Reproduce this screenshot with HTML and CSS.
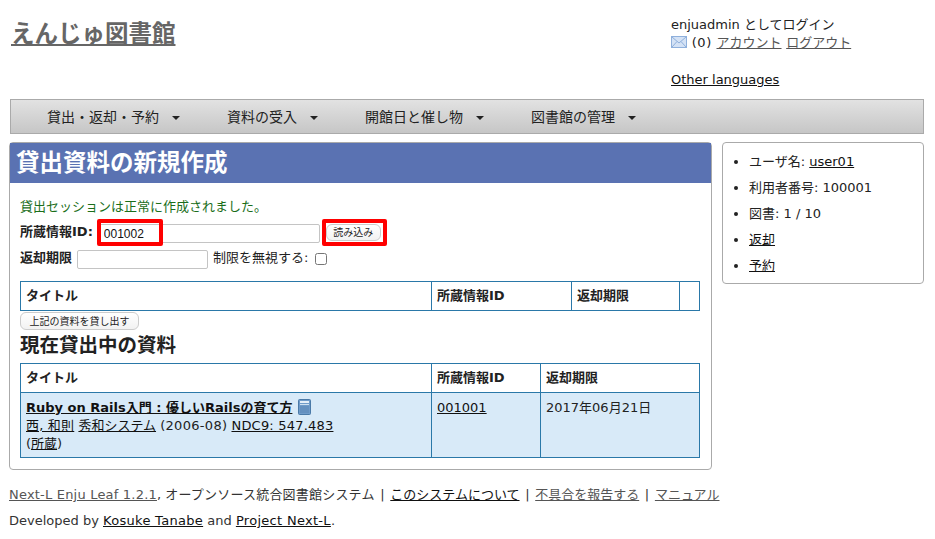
FILE: index.html
```html
<!DOCTYPE html>
<html lang="ja">
<head>
  <meta charset="UTF-8">
  <title>えんじゅ図書館</title>
  <link rel="stylesheet" href="styles.css">
</head>
<body>
<div class="header">
  <h1 class="site-title"><a href="#">えんじゅ図書館</a></h1>
  <div class="user-box">
    <div>enjuadmin としてログイン</div>
    <div class="user-links">
      <svg class="mail-icon" width="16" height="12" viewBox="0 0 16 12">
        <rect x="0.5" y="0.5" width="15" height="11" fill="#d4e2f5" stroke="#8fb0dc"/>
        <path d="M1 1 L8 7 L15 1 M1 11 L6 5.5 M15 11 L10 5.5" fill="none" stroke="#8fb0dc"/>
      </svg>
      <span class="count">(0)</span> <a href="#" class="grey">アカウント</a> <a href="#" class="grey">ログアウト</a>
    </div>
    <div class="lang"><a href="#">Other languages</a></div>
  </div>
</div>

<div class="nav">
  <a href="#">貸出・返却・予約<span class="caret"></span></a>
  <a href="#">資料の受入<span class="caret"></span></a>
  <a href="#">開館日と催し物<span class="caret"></span></a>
  <a href="#">図書館の管理<span class="caret"></span></a>
</div>

<div class="content">
  <div class="panel">
    <h2 class="panel-title">貸出資料の新規作成</h2>
    <div class="panel-body">
      <p class="notice">貸出セッションは正常に作成されました。</p>
      <form class="checkout-form">
        <div class="form-row row-id">
          <label class="field-label">所蔵情報ID:</label>
          <input type="text" class="input-id" value="001002">
          <button type="button" class="btn btn-load">読み込み</button>
          <span class="mark mark-id"></span>
          <span class="mark mark-load"></span>
        </div>
        <div class="form-row row-due">
          <label class="field-label">返却期限</label>
          <input type="text" class="input-date">
          <span class="ignore">制限を無視する:</span>
          <input type="checkbox" class="check">
        </div>
      </form>

      <table class="list list-new">
        <tr>
          <th class="col-title">タイトル</th>
          <th class="col-id">所蔵情報ID</th>
          <th class="col-due">返却期限</th>
          <th class="col-x"></th>
        </tr>
      </table>
      <button type="button" class="btn btn-checkout">上記の資料を貸し出す</button>

      <h3 class="sub-title">現在貸出中の資料</h3>
      <table class="list list-current">
        <tr>
          <th class="col-title">タイトル</th>
          <th class="col-id2">所蔵情報ID</th>
          <th>返却期限</th>
        </tr>
        <tr class="row-blue">
          <td>
            <a href="#" class="book-title">Ruby on Rails入門 : 優しいRailsの育て方</a>
            <svg class="book-icon" width="13" height="16" viewBox="0 0 13 16">
              <rect x="0.5" y="0.5" width="12" height="15" rx="1" fill="#6f9bc9" stroke="#4a7aa8"/>
              <rect x="2" y="2" width="9" height="2" fill="#e4eef8"/>
              <rect x="2" y="5" width="9" height="1" fill="#cfe0f0"/>
              <rect x="2" y="7" width="9" height="7" fill="#6490bf"/>
            </svg>
            <br>
            <a href="#" class="wide-s">西, 和則</a> <a href="#">秀和システム</a> <span class="wide">(2006-08)</span> <a href="#" class="wide-s">NDC9: 547.483</a><br>
            (<a href="#">所蔵</a>)
          </td>
          <td><a href="#">001001</a></td>
          <td>2017年06月21日</td>
        </tr>
      </table>
    </div>
  </div>

  <ul class="side">
    <li>ユーザ名: <a href="#">user01</a></li>
    <li>利用者番号: 100001</li>
    <li>図書: 1 / 10</li>
    <li><a href="#">返却</a></li>
    <li><a href="#">予約</a></li>
  </ul>
</div>

<div class="footer">
  <p><a href="#" class="grey wide-s">Next-L Enju Leaf 1.2.1</a>, <span class="wide-s">オープンソース統合図書館システム</span> <span class="sep">|</span> <a href="#">このシステムについて</a> <span class="sep">|</span> <a href="#" class="grey">不具合を報告する</a> <span class="sep">|</span> <a href="#" class="grey">マニュアル</a></p>
  <p>Developed by <a href="#" class="wide">Kosuke Tanabe</a> and <a href="#" class="wide">Project Next-L</a>.</p>
</div>
</body>
</html>
```

FILE: styles.css
```css
body {
  margin: 0;
  font-family: "DejaVu Sans", "Noto Sans CJK JP", sans-serif;
  font-size: 13px;
  line-height: 18px;
  color: #222;
  background: #fff;
}

a { color: #111; }
a.grey { color: #555; }

.wide { letter-spacing: 0.3px; }
.wide-s { letter-spacing: 0.2px; }

.header {
  display: flex;
  justify-content: space-between;
  height: 99px;
  padding-left: 11px;
}

.site-title {
  margin: 19px 0 0;
  font-size: 23.5px;
  line-height: 30px;
}
.site-title a { color: #666; }

.user-box {
  width: 264px;
  padding-top: 16px;
}
.user-links { margin-bottom: 19px; word-spacing: 0.5px; }
.mail-icon { vertical-align: -1px; }
.count { letter-spacing: 0.6px; }

.nav {
  display: flex;
  box-sizing: border-box;
  margin: 0 11px 0 10px;
  height: 35px;
  padding-left: 36px;
  align-items: center;
  border: 1px solid #aaa;
  background: linear-gradient(#e2e2e2, #c6c6c6);
}
.nav a {
  margin-right: 47px;
  color: #222;
  text-decoration: none;
  font-size: 14px;
}
.caret {
  display: inline-block;
  margin-left: 13px;
  vertical-align: 2px;
  border-top: 4px solid #222;
  border-left: 4px solid transparent;
  border-right: 4px solid transparent;
}

.content {
  display: flex;
  align-items: flex-start;
  gap: 10px;
  margin: 8px 11px 0 9px;
}

.panel {
  box-sizing: border-box;
  width: 703px;
  height: 328px;
  border: 1px solid #aaa;
  border-radius: 4px;
}
.panel-title {
  margin: 0;
  height: 40px;
  padding-left: 6px;
  background: #5a72b2;
  color: #fff;
  font-size: 23.5px;
  line-height: 40px;
}
.panel-body { padding: 0 10px; }

.notice {
  margin: 0;
  padding-top: 15px;
  color: #1a6e1a;
}

.checkout-form { margin-top: 2px; }
.form-row {
  position: relative;
  display: flex;
  align-items: flex-start;
}
.row-id { height: 26px; }
.row-due { height: 28px; }

.field-label { font-weight: bold; margin-right: 2px; }
.row-id .field-label { margin: 5px 5px 0 0; }
.row-due .field-label { margin-top: 5px; }

.input-id, .input-date {
  box-sizing: border-box;
  height: 19px;
  margin-top: 6px;
  padding: 1px 5px 0;
  border: 1px solid #c4c4c4;
  border-radius: 2px;
  font: 12px "Liberation Sans", sans-serif;
  color: #111;
}
.input-id { width: 222px; }
.input-date { width: 131px; margin-left: 3px; }

.btn {
  box-sizing: border-box;
  height: 17px;
  padding: 0;
  border: 1px solid #ccc;
  border-radius: 6px;
  background: linear-gradient(#fff, #f2f2f2);
  color: #222;
  font: 10px/15px "DejaVu Sans", "Noto Sans CJK JP", sans-serif;
}
.btn-load { width: 55px; margin: 6px 0 0 6px; }
.btn-checkout { display: block; width: 119px; height: 18px; margin-top: 1px; }

.ignore { margin: 5px 0 0 5px; }
.check {
  width: 12px;
  height: 12px;
  margin: 9px 0 0 7px;
}

/* red marks laid over the screenshot */
.mark {
  position: absolute;
  top: 1px;
  box-sizing: border-box;
  height: 27px;
  border: 4px solid #f00;
  border-radius: 2px;
}
.mark-id { left: 77px; width: 66px; }
.mark-load { left: 302px; width: 65px; }

.list {
  width: 680px;
  border-collapse: collapse;
  table-layout: fixed;
}
.list th, .list td {
  border: 1px solid #2a78a8;
  padding: 5px;
  text-align: left;
  vertical-align: top;
}
.list th { height: 18px; }
.list-new { margin-top: 9px; }
.col-title { width: 400px; }
.col-id { width: 129px; }
.col-due { width: 97px; }
.col-id2 { width: 98px; }

.row-blue td { background: #d8eaf8; padding-top: 6px; padding-bottom: 4px; }
.book-title { font-weight: bold; }
.book-icon { vertical-align: -3px; margin-left: 1px; }

.sub-title {
  margin: 3px 0 4px;
  font-size: 19.5px;
  line-height: 26px;
  color: #222;
}

.side {
  box-sizing: border-box;
  width: 202px;
  height: 142px;
  margin: 0;
  padding: 6px 10px 0 26px;
  border: 1px solid #aaa;
  border-radius: 4px;
}
.side li { height: 26px; line-height: 26px; }

.footer {
  margin: 16px 9px 0;
  color: #333;
}
.footer p { margin: 0 0 8px; }
.sep { margin: 0 1.5px; }
```
